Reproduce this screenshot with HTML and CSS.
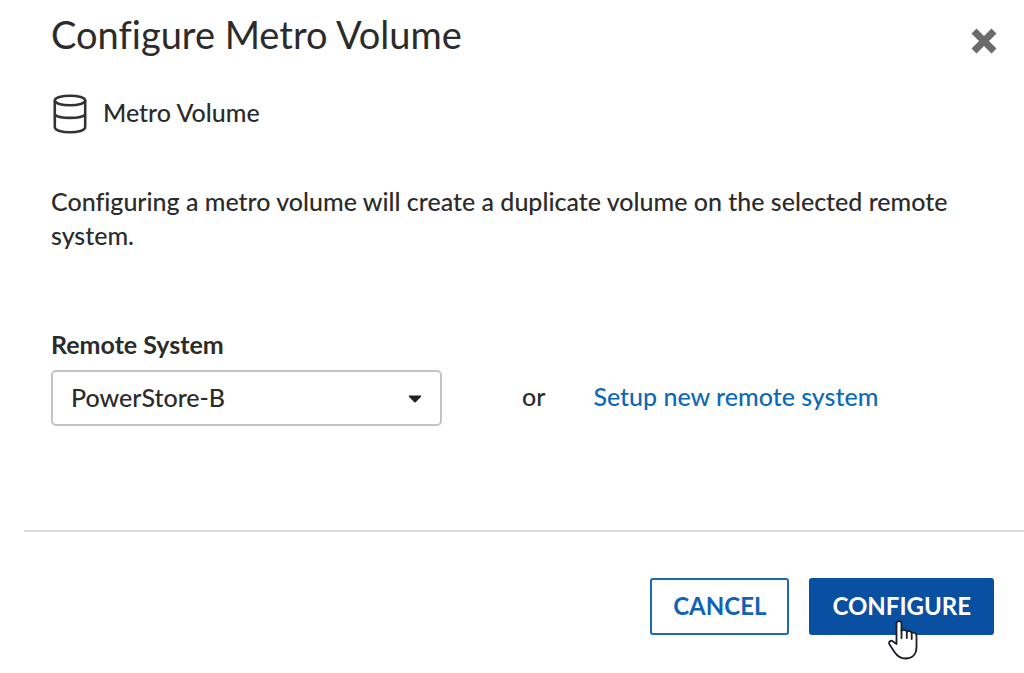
FILE: index.html
```html
<!DOCTYPE html>
<html lang="en">
<head>
  <meta charset="UTF-8">
  <meta name="viewport" content="width=device-width, initial-scale=1.0">
  <title>Configure Metro Volume</title>
  <link rel="stylesheet" href="styles.css">
</head>
<body>
  <main class="dialog">
    <header class="dialog-header">
      <h1>Configure Metro Volume</h1>
      <button type="button" class="close-btn" aria-label="Close">
        <svg viewBox="0 0 26 26" width="26" height="26"><path d="M5.5 0.5L13 8L20.5 0.5L25.5 5.5L18 13L25.5 20.5L20.5 25.5L13 18L5.5 25.5L0.5 20.5L8 13L0.5 5.5Z" fill="#6b6b6b"/></svg>
      </button>
    </header>
    <div class="volume">
      <svg viewBox="0 0 36 40" width="36" height="40" fill="none" stroke="#333" stroke-width="2.6">
        <ellipse cx="18" cy="6.5" rx="15.2" ry="4.8"/>
        <path d="M2.8 6.5V33C2.8 40 33.2 40 33.2 33V6.5M2.8 20.5C6 25 30 25 33.2 20.5"/>
      </svg>
      <span>Metro Volume</span>
    </div>
    <p class="description">Configuring a metro volume will create a duplicate volume on the selected remote system.</p>
    <form id="metroForm">
      <label class="field-label" for="remoteSystem">Remote System</label>
      <div class="remote-row">
        <div class="select-wrap">
          <select id="remoteSystem" name="remoteSystem">
            <option>PowerStore-B</option>
          </select>
          <svg class="caret" viewBox="0 0 14 8" width="14" height="8"><path d="M1.5 0.5H12.5Q14 0.5 13 1.7L8.2 6.8Q7 8 5.8 6.8L1 1.7Q0 0.5 1.5 0.5Z" fill="#222"/></svg>
        </div>
        <span class="or">or</span>
        <a href="#">Setup new remote system</a>
      </div>
    </form>
    <footer class="dialog-footer">
      <button type="button" class="btn">CANCEL</button>
      <div class="configure-wrap">
        <button type="submit" form="metroForm" class="btn btn-primary">CONFIGURE</button>
        <svg class="pointer" viewBox="0 0 30 40" width="30" height="40" stroke="#1e1e28" stroke-width="1.8" stroke-linecap="round" stroke-linejoin="round">
          <path d="M8.5 24V3.5C8.5 0.3 13.5 0.3 13.5 3.5V11C15 9.2 18 9.7 18.8 11.8C20.5 10.2 23 11 23.7 13C26 12 28.5 13.2 28.5 16V27C28.5 34 24.5 38.5 17.5 38.5C13 38.5 9.5 36.5 6.5 32L1.5 24.5C0 21 3.5 19.7 5.7 22L8.5 24Z" fill="#fff"/>
          <path d="M13.5 10V18M18.8 12V18M23.7 13.5V19" fill="none"/>
        </svg>
      </div>
    </footer>
  </main>
</body>
</html>
```

FILE: styles.css
```css
* { box-sizing: border-box; }
body { margin: 0; background: #fff; color: #2b2b2b; font-family: Lato, "Open Sans", sans-serif; font-size: 25px; font-weight: 500; font-variant-ligatures: none; }
.dialog { padding: 10px 0 0 24px; }
.dialog-header { display: flex; justify-content: space-between; padding: 0 27px; }
h1 { margin: 0; font-size: 38px; line-height: 48px; font-weight: 400; }
.close-btn { align-self: center; display: flex; padding: 0; margin-top: 14px; border: 0; background: none; cursor: pointer; }
.volume { display: flex; align-items: center; gap: 15px; padding: 0 28px; margin-top: 36px; line-height: 36px; }
.volume span { padding-bottom: 4px; }
.description { margin: 50px 64px 0 27px; line-height: 34px; }
#metroForm { padding: 0 27px; margin-top: 76px; }
.field-label { display: block; font-weight: 700; line-height: 32px; }
.remote-row { display: flex; align-items: center; margin-top: 10px; line-height: 32px; }
.select-wrap { position: relative; flex: 0 1 391px; }
select { display: block; width: 100%; height: 56px; padding: 0 18px 3px; border: 2px solid #c4c4c4; border-radius: 5px; appearance: none; background: #fff; color: inherit; font: inherit; cursor: pointer; }
.caret { position: absolute; right: 20px; top: 25px; pointer-events: none; }
.or { margin: 0 48px 0 80px; }
.or, .remote-row a { padding-bottom: 5px; }
a { color: #0c69b8; text-decoration: none; }
.dialog-footer { display: flex; justify-content: flex-end; align-items: flex-start; gap: 20px; margin-top: 104px; padding: 46px 30px 36px 0; border-top: 2px solid #ddd; }
.btn { height: 57px; padding: 0 21px 3px; border: 2px solid #1a68b8; border-radius: 3px; background: #fff; color: #1062b8; font: inherit; font-size: 24px; font-weight: 700; cursor: pointer; }
.btn-primary { background: #0a50a2; border-color: #0a50a2; color: #fff; }
.configure-wrap { position: relative; }
.pointer { position: absolute; left: 79px; top: 42px; pointer-events: none; }
```
